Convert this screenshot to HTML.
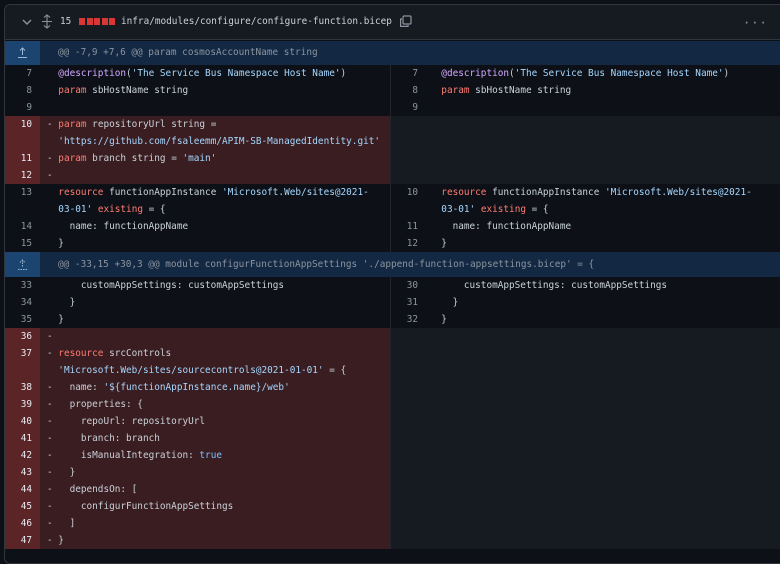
<!DOCTYPE html>
<html><head><meta charset="utf-8"><style>
*{margin:0;padding:0;box-sizing:border-box}
body{width:780px;height:548px;overflow:hidden;background:#0d1117;font-family:"DejaVu Sans Mono","Liberation Mono",monospace;font-size:9.4px;color:#c9d1d9;position:relative}
.box{position:absolute;left:4px;top:4px;width:782px;height:560px;border:1px solid #30363d;border-radius:6px;overflow:hidden;background:#0d1117}
.hdr{position:absolute;left:0;top:0;right:0;height:35px;background:#161b22;border-bottom:1px solid #30363d}
.row{position:absolute;height:17px;line-height:17px;white-space:pre}
.n{position:absolute;width:35px;text-align:right;padding-right:8px;color:#8b949e;height:100%}
.c{position:absolute;height:100%;padding-left:7px}
.k{color:#ff7b72}.s{color:#a5d6ff}.p{color:#d2a8ff}.b{color:#79c0ff}
</style></head><body>
<div class="box">
<div class="hdr">
<svg style="position:absolute;left:17px;top:13px" width="10" height="8" viewBox="0 0 10 8"><path d="M1 2l4 4 4-4" stroke="#8b949e" stroke-width="1.4" fill="none"/></svg>
<svg style="position:absolute;left:36px;top:9px" width="12" height="15" viewBox="0 0 12 15"><path d="M6 1v13M3 3.5L6 1l3 2.5M3 11.5L6 14l3-2.5M1 7.5h10" stroke="#8b949e" stroke-width="1.1" fill="none"/></svg>
<span style="position:absolute;left:55px;top:11px;color:#c9d1d9">15</span>
<div style="position:absolute;left:74px;top:13px;display:flex;gap:1.5px"><i style="width:6px;height:7px;background:#da3633"></i><i style="width:6px;height:7px;background:#da3633"></i><i style="width:6px;height:7px;background:#da3633"></i><i style="width:6px;height:7px;background:#da3633"></i><i style="width:6px;height:7px;background:#da3633"></i></div>
<span style="position:absolute;left:116px;top:11px;color:#c9d1d9">infra/modules/configure/configure-function.bicep</span>
<svg style="position:absolute;left:394px;top:10px" width="13" height="13" viewBox="0 0 13 13"><rect x="4" y="1" width="8" height="8" rx="1" stroke="#8b949e" fill="none" stroke-width="1.2"/><path d="M3 4H1.6v7.4H9V10" stroke="#8b949e" fill="none" stroke-width="1.2"/></svg>
<span style="position:absolute;left:738px;top:11px;color:#8b949e;font-size:12px;letter-spacing:1px">···</span>
</div>
<div id="d"></div>
</div>
<script>
const L=[];
function r(y,h,t,ln,lc,rn,rc){L.push([y,h,t,ln,lc,rn,rc]);}
const desc='<span class="p">@description</span>(<span class="s">\'The Service Bus Namespace Host Name\'</span>)';
const sb='<span class="k">param</span> sbHostName string';
const res='<span class="k">resource</span> functionAppInstance <span class="s">\'Microsoft.Web/sites@2021-</span>\n<span class="s">03-01\'</span> <span class="k">existing</span> = {';
r(36,24,'h','','@@ -7,9 +7,6 @@ param cosmosAccountName string');
r(60,17,'n',7,'  '+desc,7,'  '+desc);
r(77,17,'n',8,'  '+sb,8,'  '+sb);
r(94,17,'n',9,'',9,'');
r(111,34,'d',10,'- <span class="k">param</span> repositoryUrl string =\n  <span class="s">\'https://github.com/fsaleemm/APIM-SB-ManagedIdentity.git\'</span>');
r(145,17,'d',11,'- <span class="k">param</span> branch string = <span class="s">\'main\'</span>');
r(162,17,'d',12,'-');
r(179,34,'n',13,'  '+res.replace('\n','\n  '),10,'  '+res.replace('\n','\n  '));
r(213,17,'n',14,'    name: functionAppName',11,'    name: functionAppName');
r(230,17,'n',15,'  }',12,'  }');
r(247,25,'h','','@@ -33,15 +30,3 @@ module configurFunctionAppSettings \'./append-function-appsettings.bicep\' = {');
r(272,17,'n',33,'      customAppSettings: customAppSettings',30,'      customAppSettings: customAppSettings');
r(289,17,'n',34,'    }',31,'    }');
r(306,17,'n',35,'  }',32,'  }');
r(323,17,'d',36,'-');
r(340,34,'d',37,'- <span class="k">resource</span> srcControls\n  <span class="s">\'Microsoft.Web/sites/sourcecontrols@2021-01-01\'</span> = {');
const del=[[38,'-   name: <span class="s">\'${functionAppInstance.name}/web\'</span>'],[39,'-   properties: {'],[40,'-     repoUrl: repositoryUrl'],[41,'-     branch: branch'],[42,'-     isManualIntegration: <span class="b">true</span>'],[43,'-   }'],[44,'-   dependsOn: ['],[45,'-     configurFunctionAppSettings'],[46,'-   ]'],[47,'- }']];
let y=374;for(const [n,c] of del){r(y,17,'d',n,c);y+=17;}
let h='';
for(const [y,ht,t,ln,lc,rn,rc] of L){
 if(t==='h'){
  h+=`<div class="row" style="top:${y}px;left:0;width:780px;height:${ht}px;line-height:${ht}px;background:#132843"><div class="n" style="background:#1c4470;width:35px"></div><svg style="position:absolute;left:12px;top:${ht/2-6}px" width="11" height="12" viewBox="0 0 11 12"><path d="M5.5 1v7M3 3.5L5.5 1 8 3.5M1 10.5h9" stroke="#9cb6d4" stroke-width="1" fill="none" stroke-dasharray="${y<100?'':'1.5 1'}"/></svg><div class="c" style="left:35px;color:#8b949e;padding-left:18px">${lc}</div></div>`;
 } else {
  const dl=t==='d';
  h+=`<div class="row" style="top:${y}px;left:0;width:385px;height:${ht}px;background:${dl?'#3a1d20':'#0d1117'}"><div class="n" style="background:${dl?'#5b2427':'#0d1117'};color:${dl?'#e6edf3':'#8b949e'}">${ln}</div><div class="c" style="left:35px">${lc}</div></div>`;
  h+=`<div class="row" style="top:${y}px;left:385px;width:400px;height:${ht}px;background:${dl?'#161b22':'#0d1117'};border-left:1px solid #21262d">${dl?'':`<div class="n">${rn}</div><div class="c" style="left:35px;padding-left:4px">${rc}</div>`}</div>`;
 }
}
document.getElementById('d').innerHTML=h;
</script>
</body></html>
